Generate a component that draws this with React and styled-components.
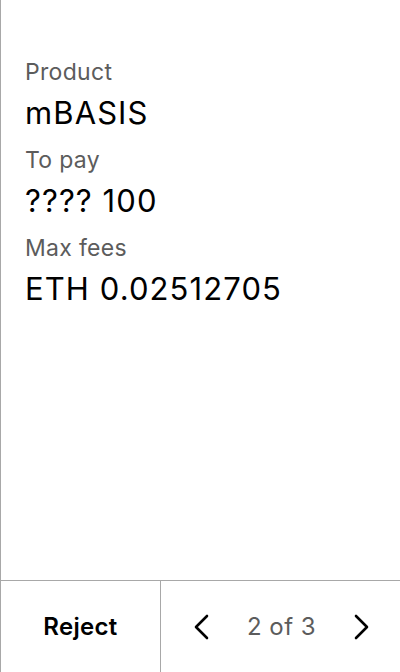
import React from 'react';
import styled, { createGlobalStyle } from 'styled-components';

const GlobalStyle = createGlobalStyle`
  html, body {
    margin: 0;
    padding: 0;
    background: #fff;
  }
  body {
    font-family: Inter, "Noto Sans", sans-serif;
    -webkit-font-smoothing: antialiased;
  }
`;

const Screen = styled.div`
  width: 400px;
  height: 672px;
  box-sizing: border-box;
  border-left: 1px solid #a8a8a8;
  display: flex;
  flex-direction: column;
`;

const Body = styled.div`
  flex: 1;
  padding: 56px 24px 0 24px;
  display: flex;
  flex-direction: column;
`;

const Label = styled.div`
  font-size: 23px;
  line-height: 32px;
  letter-spacing: 0.3px;
  color: #5c5c5c;
  margin-bottom: 7px;
`;

const Value = styled.div`
  font-size: 31px;
  line-height: 36px;
  letter-spacing: 1.1px;
  color: #000;
  margin-bottom: 13px;
`;

const Footer = styled.div`
  height: 91px;
  border-top: 1px solid #a8a8a8;
  display: flex;
`;

const RejectButton = styled.button`
  width: 160px;
  border: none;
  border-right: 1px solid #a8a8a8;
  background: none;
  font-family: inherit;
  font-size: 24px;
  font-weight: 600;
  letter-spacing: 0.3px;
  color: #000;
  padding: 0;
`;

const Pager = styled.div`
  flex: 1;
  display: flex;
  align-items: center;
  justify-content: space-between;
  padding: 0 28px 0 30px;
`;

const NavButton = styled.button`
  border: none;
  background: none;
  padding: 0;
  width: 20px;
  height: 28px;
  display: flex;
  align-items: center;
  justify-content: center;
`;

const PageText = styled.span`
  font-size: 24px;
  letter-spacing: 0.5px;
  color: #5c5c5c;
`;

const Chevron = ({ dir }) => (
  <svg width="20" height="28" viewBox="0 0 20 28" fill="none" stroke="#000" strokeWidth="2.6" strokeLinecap="round" strokeLinejoin="round">
    {dir === 'left' ? <path d="M16 3 L5 14 L16 25" /> : <path d="M4 3 L15 14 L4 25" />}
  </svg>
);

const fields = [
  { label: 'Product', value: 'mBASIS' },
  { label: 'To pay', value: '???? 100' },
  { label: 'Max fees', value: 'ETH 0.02512705' },
];

export default function App() {
  return (
    <>
      <GlobalStyle />
      <Screen>
        <Body>
          {fields.map(f => (
            <React.Fragment key={f.label}>
              <Label>{f.label}</Label>
              <Value>{f.value}</Value>
            </React.Fragment>
          ))}
        </Body>
        <Footer>
          <RejectButton>Reject</RejectButton>
          <Pager>
            <NavButton><Chevron dir="left" /></NavButton>
            <PageText>2 of 3</PageText>
            <NavButton><Chevron dir="right" /></NavButton>
          </Pager>
        </Footer>
      </Screen>
    </>
  );
}
